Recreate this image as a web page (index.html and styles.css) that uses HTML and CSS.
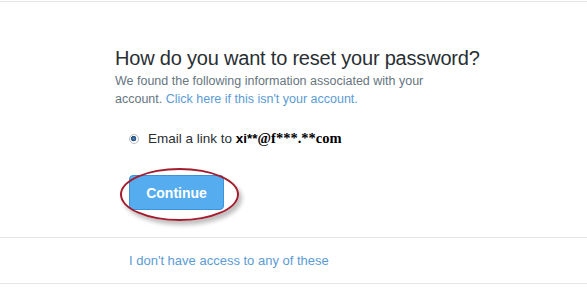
FILE: index.html
```html
<!DOCTYPE html>
<html>
<head>
	<title>Reset password</title>
	<link rel="stylesheet" href="styles.css">
</head>
<body>
	<div class="page">
		<div class="reset">
			<h1 class="title">How do you want to reset your password?</h1>
			<p class="info">We found the following information associated with your<br>account. <a href="#" class="link">Click here if this isn't your account.</a></p>
			<label class="option">
				<input type="radio" name="method" class="radio" checked>
				<span>Email a link to <b class="mail">xi**<span class="serif">@f***.**com</span></b></span>
			</label>
			<div class="actions">
				<button class="btn">Continue</button>
				<span class="mark"></span>
			</div>
		</div>
		<div class="footer">
			<a href="#" class="link">I don't have access to any of these</a>
		</div>
	</div>
</body>
</html>
```
FILE: styles.css
```css
* {
	box-sizing: border-box;
}

body {
	margin: 0;
	background: #fff;
	font-family: "Liberation Sans", Arial, sans-serif;
	color: #292f33;
}

.page {
	margin-top: 1px;
	border-top: 1px solid #e6e6e6;
}

.reset {
	padding: 42px 0 0 115px;
	height: 235px;
}

.title {
	margin: 0;
	font-size: 20px;
	letter-spacing: -0.2px;
	font-weight: normal;
	line-height: 28px;
	color: #292f33;
}

.info {
	margin: 0;
	font-size: 12.5px;
	line-height: 18px;
	color: #66757f;
}

.link {
	color: #5b9bd5;
	text-decoration: none;
}

.option {
	display: flex;
	align-items: center;
	margin: 22px 0 0 14px;
	font-size: 13.5px;
	color: #292f33;
}

.radio {
	appearance: none;
	-webkit-appearance: none;
	margin: 0 9px 0 0;
	width: 10px;
	height: 10px;
	border: 1px solid #b8bec4;
	border-radius: 50%;
	background: #fff;
}

.radio:checked {
	background: radial-gradient(circle at 45% 45%, #5e8ab8 0, #1d4a7c 2.5px, #fff 3px);
}

.mail {
	font-weight: bold;
	color: #000;
}

.serif {
	font-family: "Liberation Serif", "Times New Roman", serif;
	font-size: 14.5px;
}

.actions {
	position: relative;
	margin: 28px 0 0 14px;
	width: 95px;
}

.btn {
	display: block;
	width: 95px;
	height: 35px;
	border: 1px solid #3b94d9;
	border-radius: 4px;
	background: #55acee;
	color: #fff;
	font-family: "Liberation Sans", Arial, sans-serif;
	font-size: 14px;
	font-weight: bold;
}

.mark {
	position: absolute;
	left: -9px;
	top: -7px;
	width: 119px;
	height: 53px;
	border: 2px solid #a41d2e;
	border-radius: 50%;
	box-shadow: 3px 4px 4px rgba(0, 0, 0, 0.25);
}

.footer {
	border-top: 1px solid #e6e6e6;
	border-bottom: 1px solid #e6e6e6;
	height: 47px;
	padding: 15px 0 0 129px;
	font-size: 13px;
	line-height: 16px;
}
```
